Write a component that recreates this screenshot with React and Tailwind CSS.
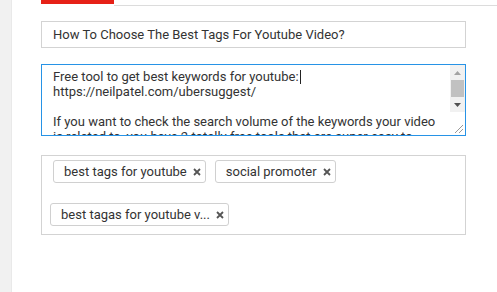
export default function App() {
  const font = { fontFamily: 'Roboto, "Liberation Sans", sans-serif' };

  return (
    <div className="flex h-[292px] w-[497px] overflow-hidden bg-white text-[13px] text-[#333]" style={font}>
      {/* left gutter */}
      <div className="w-[12px] shrink-0 border-r border-[#e9e9e9] bg-[#f1f1f1]" />

      <div className="flex flex-1 flex-col pl-[29px]">
        {/* tabs underline */}
        <div className="flex h-[6px] items-start">
          <div className="h-[4px] w-[73px] bg-[#e62117]" />
          <div className="mt-[5px] h-px flex-1 bg-[#dcdcdc]" />
        </div>

        <div className="mr-[31px] flex flex-col">
          {/* title */}
          <div className="mt-[15px] flex h-[27px] items-center border border-[#d3d3d3] pl-[11px]">
            How To Choose The Best Tags For Youtube Video?
          </div>

          {/* description */}
          <div className="mt-[16px] flex h-[72px] border border-[#2793e6]">
            <div className="flex-1 overflow-hidden pl-[11px] pt-[4px] leading-[15px]">
              <div className="flex items-center">
                Free tool to get best keywords for youtube:
                <span className="ml-px inline-block h-[14px] w-px bg-[#222]" />
              </div>
              <div>https://neilpatel.com/ubersuggest/</div>
              <div className="h-[15px]" />
              <div className="whitespace-nowrap">If you want to check the search volume of the keywords your video</div>
              <div className="whitespace-nowrap">is related to, you have 2 totally free tools that are super easy to</div>
            </div>
            <div className="flex w-[15px] flex-col bg-[#f1f1f1]">
              <div className="flex h-[15px] items-center justify-center">
                <svg width="7" height="4" viewBox="0 0 7 4"><path d="M0 4 L3.5 0 L7 4 Z" fill="#a3a3a3" /></svg>
              </div>
              <div className="mx-[1px] h-[17px] bg-[#c1c1c1]" />
              <div className="flex h-[15px] items-center justify-center">
                <svg width="7" height="4" viewBox="0 0 7 4"><path d="M0 0 L3.5 4 L7 0 Z" fill="#505050" /></svg>
              </div>
              <div className="flex flex-1 items-end justify-end bg-white pb-[2px] pr-[2px]">
                <svg width="9" height="9" viewBox="0 0 9 9">
                  <path d="M1 9 L9 1 M5 9 L9 5" stroke="#999" strokeWidth="1" />
                </svg>
              </div>
            </div>
          </div>

          {/* tags */}
          <div className="mt-[19px] flex h-[80px] flex-col border border-[#d3d3d3] pt-[4px]">
            <div className="flex gap-[9px] pl-[11px]">
              <Tag label="best tags for youtube" />
              <Tag label="social promoter" />
            </div>
            <div className="mt-[20px] flex pl-[8px]">
              <Tag label="best tagas for youtube v..." />
            </div>
          </div>
        </div>
      </div>
    </div>
  );
}

function Tag({ label }) {
  return (
    <div className="flex h-[23px] items-center rounded-[3px] border border-[#d0d0d0] pl-[10px] pr-[4px]">
      <span>{label}</span>
      <svg className="ml-[6px]" width="8" height="8" viewBox="0 0 8 8">
        <path d="M1 1 L7 7 M7 1 L1 7" stroke="#555" strokeWidth="1.8" />
      </svg>
    </div>
  );
}
